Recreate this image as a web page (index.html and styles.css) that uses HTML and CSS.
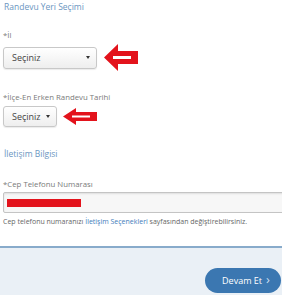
FILE: index.html
```html
<!DOCTYPE html>
<html lang="tr">
<head>
<meta charset="utf-8">
<link rel="stylesheet" href="styles.css">
</head>
<body>
<div class="page">
  <section class="form">
    <h2 class="section-title">Randevu Yeri Seçimi</h2>
    <div class="field f-il">
      <label class="label">*İl</label>
      <div class="row gap7">
        <div class="select w-wide"><span>Seçiniz</span><span class="caret"></span></div>
        <svg class="arrow a1" viewBox="0 0 34 27" width="34" height="27">
          <polygon points="0,13.5 14,0 14,7 34,7 34,20 14,20 14,27" fill="#e3131c"/>
          <rect x="9" y="12" width="18" height="3" fill="#fff"/>
        </svg>
      </div>
    </div>
    <div class="field f-ilce">
      <label class="label">*İlçe-En Erken Randevu Tarihi</label>
      <div class="row gap6">
        <div class="select w-narrow"><span>Seçiniz</span><span class="caret"></span></div>
        <svg class="arrow a2" viewBox="0 0 34 17" width="34" height="17">
          <polygon points="0,8.5 13,0 13,4 34,4 34,13 13,13 13,17" fill="#e3131c"/>
          <rect x="9" y="7.5" width="18" height="2" fill="#fff"/>
        </svg>
      </div>
    </div>
    <h2 class="section-title s2">İletişim Bilgisi</h2>
    <div class="field f-tel">
      <label class="label">*Cep Telefonu Numarası</label>
      <div class="input"><span class="redbar"></span></div>
      <p class="help">Cep telefonu numaranızı <a class="link">İletişim Seçenekleri</a> sayfasından değiştirebilirsiniz.</p>
    </div>
  </section>
  <footer class="footer">
    <button class="btn">Devam Et <span class="chev">&#x203A;</span></button>
  </footer>
</div>
</body>
</html>
```
FILE: styles.css
```css
html, body {
  margin: 0;
  padding: 0;
  background: #fff;
  font-family: "Open Sans", "Noto Sans", sans-serif;
  overflow: hidden;
}
.page {
  width: 282px;
  height: 295px;
  display: flex;
  flex-direction: column;
}
.form {
  padding-left: 3px;
  height: 246px;
}
.section-title {
  margin: 0;
  padding-left: 1px;
  font-size: 8.5px;
  line-height: 14px;
  font-weight: 400;
  color: #6b96bf;
}
.s2 { margin-top: 20px; }
.label {
  display: block;
  font-size: 7.8px;
  line-height: 14px;
  color: #7a7a7a;
}
.f-il { margin-top: 14px; }
.f-ilce { margin-top: 19px; }
.f-tel { margin-top: 16px; }
.f-il .row, .f-ilce .row { margin-top: 2px; }
.row {
  display: flex;
  align-items: center;
}
.gap7 { gap: 7px; }
.gap6 { gap: 6px; }
.select {
  box-sizing: border-box;
  height: 22px;
  border: 1px solid #c8c8c8;
  border-radius: 3px;
  background: linear-gradient(#ffffff, #eeeeee);
  box-shadow: 0 1px 1px rgba(0,0,0,0.08);
  display: flex;
  align-items: center;
  justify-content: space-between;
  padding: 0 6px 0 8px;
  font-size: 9px;
  color: #444;
}
.w-wide { width: 94px; }
.w-narrow { width: 54px; height: 21px; }
.caret {
  width: 0;
  height: 0;
  border-left: 2.5px solid transparent;
  border-right: 2.5px solid transparent;
  border-top: 3px solid #333;
}
.arrow { display: block; flex: none; }
.input {
  box-sizing: border-box;
  margin-top: 1px;
  width: 290px;
  height: 21px;
  border: 1px solid #c4c4c4;
  border-radius: 2px;
  background: #f7f7f7;
  box-shadow: inset 0 1px 2px rgba(0,0,0,0.1);
  display: flex;
  align-items: center;
  padding-left: 3px;
}
.redbar {
  display: block;
  width: 74px;
  height: 8px;
  background: #e3131c;
}
.help {
  margin: 3px 0 0;
  font-size: 7px;
  line-height: 12px;
  color: #666;
  white-space: nowrap;
}
.link { color: #3f7dbb; }
.footer {
  flex: 1;
  border-top: 2px solid #88abcb;
  background: #eaf0f6;
  display: flex;
  justify-content: flex-end;
  align-items: flex-start;
  padding: 20px 1px 0 0;
}
.btn {
  height: 25px;
  width: 76px;
  border: none;
  border-radius: 13px;
  background: #3b77b1;
  color: #fff;
  font-family: "Open Sans", "Noto Sans", sans-serif;
  font-size: 9px;
  padding: 0 0 0 6px;
  display: flex;
  align-items: center;
  justify-content: center;
  gap: 4px;
}
.chev { font-size: 13px; line-height: 1; color: #c9dcef; margin-top: -2px; }
```
